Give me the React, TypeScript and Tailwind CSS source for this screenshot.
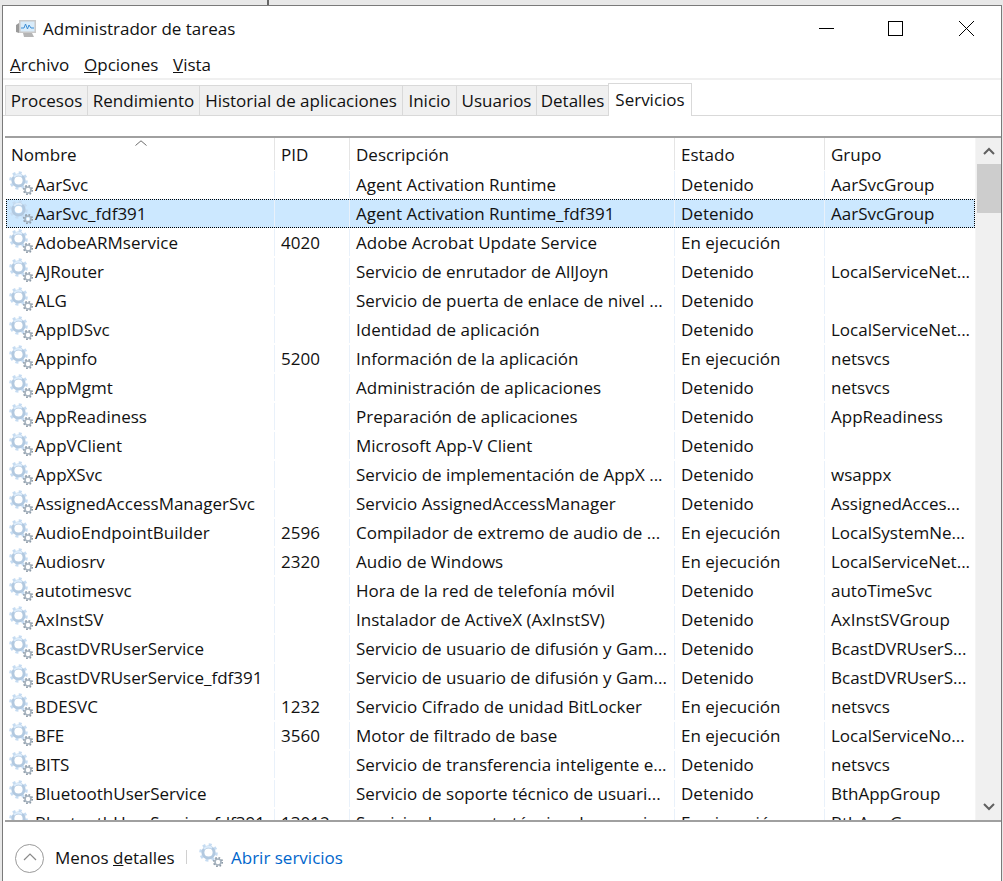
const services = [
  ['AarSvc', '', 'Agent Activation Runtime', 'Detenido', 'AarSvcGroup'],
  ['AarSvc_fdf391', '', 'Agent Activation Runtime_fdf391', 'Detenido', 'AarSvcGroup'],
  ['AdobeARMservice', '4020', 'Adobe Acrobat Update Service', 'En ejecución', ''],
  ['AJRouter', '', 'Servicio de enrutador de AllJoyn', 'Detenido', 'LocalServiceNet...'],
  ['ALG', '', 'Servicio de puerta de enlace de nivel ...', 'Detenido', ''],
  ['AppIDSvc', '', 'Identidad de aplicación', 'Detenido', 'LocalServiceNet...'],
  ['Appinfo', '5200', 'Información de la aplicación', 'En ejecución', 'netsvcs'],
  ['AppMgmt', '', 'Administración de aplicaciones', 'Detenido', 'netsvcs'],
  ['AppReadiness', '', 'Preparación de aplicaciones', 'Detenido', 'AppReadiness'],
  ['AppVClient', '', 'Microsoft App-V Client', 'Detenido', ''],
  ['AppXSvc', '', 'Servicio de implementación de AppX ...', 'Detenido', 'wsappx'],
  ['AssignedAccessManagerSvc', '', 'Servicio AssignedAccessManager', 'Detenido', 'AssignedAcces...'],
  ['AudioEndpointBuilder', '2596', 'Compilador de extremo de audio de ...', 'En ejecución', 'LocalSystemNe...'],
  ['Audiosrv', '2320', 'Audio de Windows', 'En ejecución', 'LocalServiceNet...'],
  ['autotimesvc', '', 'Hora de la red de telefonía móvil', 'Detenido', 'autoTimeSvc'],
  ['AxInstSV', '', 'Instalador de ActiveX (AxInstSV)', 'Detenido', 'AxInstSVGroup'],
  ['BcastDVRUserService', '', 'Servicio de usuario de difusión y Gam...', 'Detenido', 'BcastDVRUserS...'],
  ['BcastDVRUserService_fdf391', '', 'Servicio de usuario de difusión y Gam...', 'Detenido', 'BcastDVRUserS...'],
  ['BDESVC', '1232', 'Servicio Cifrado de unidad BitLocker', 'En ejecución', 'netsvcs'],
  ['BFE', '3560', 'Motor de filtrado de base', 'En ejecución', 'LocalServiceNo...'],
  ['BITS', '', 'Servicio de transferencia inteligente e...', 'Detenido', 'netsvcs'],
  ['BluetoothUserService', '', 'Servicio de soporte técnico de usuari...', 'Detenido', 'BthAppGroup'],
  ['BluetoothUserService_fdf391', '13012', 'Servicio de soporte técnico de usuari...', 'En ejecución', 'BthAppGroup'],
];

const tabs = [
  { name: 'Procesos', width: 'w-[82px]' },
  { name: 'Rendimiento', width: 'w-[112px]' },
  { name: 'Historial de aplicaciones', width: 'w-[203px]' },
  { name: 'Inicio', width: 'w-[54px]' },
  { name: 'Usuarios', width: 'w-[80px]' },
  { name: 'Detalles', width: 'w-[72px]' },
];

function GearIcon({ className }: { className: string }) {
  return (
    <svg className={className} viewBox="0 0 24 24" fill="none">
      <circle cx="9.5" cy="9.5" r="8" stroke="#c6dcf2" strokeWidth="2.6" strokeDasharray="3 3.28" />
      <circle cx="9.5" cy="9.5" r="5.6" stroke="#b2c9e0" strokeWidth="3" />
      <path d="M5 6 A5.6 5.6 0 0 1 13 5" stroke="#dcecfb" strokeWidth="2" />
      <circle cx="9.5" cy="9.5" r="3.6" fill="#ffffff" />
      <circle cx="19" cy="19" r="4.2" stroke="#8b98a5" strokeWidth="1.8" strokeDasharray="1.6 1.7" />
      <circle cx="19" cy="19" r="3" stroke="#a5b2be" strokeWidth="1.6" />
      <circle cx="19" cy="19" r="1.4" fill="#ffffff" />
    </svg>
  );
}

function TaskIcon() {
  return (
    <svg className="h-[22px] w-[22px]" viewBox="0 0 22 22" fill="none">
      <path d="M1 8 L4 6 L4 16 L1 15 Z" fill="#9a9a9a" />
      <rect x="4" y="3" width="17" height="13" fill="#c9c9c9" />
      <rect x="5.5" y="4.5" width="14" height="10" fill="#d9ecfa" />
      <path d="M6 11 L9 11 L10.5 7 L12.5 12 L14 8 L16 11 L19 11" stroke="#3d8fd6" strokeWidth="1" />
      <path d="M8 16 H17 L19 20 H9 Z" fill="#b5b5b5" />
    </svg>
  );
}

function Row({ service, selected }: { service: string[]; selected: boolean }) {
  const cell = 'h-full shrink-0 border-r border-[#e9f1fa] pl-[6px] whitespace-nowrap overflow-hidden leading-[27px]';
  return (
    <div className={`ml-px flex h-[29px] w-[969px] shrink-0 border border-dotted ${selected ? 'border-[#000000] bg-[#cce8ff]' : 'border-transparent'}`}>
      <div className={`${cell} w-[268px] flex items-center !pl-[2px]`}>
        <GearIcon className="h-[24px] w-[24px] shrink-0 -mt-[3px] mr-[2px]" />
        <span>{service[0]}</span>
      </div>
      <div className={`${cell} w-[75px]`}>{service[1]}</div>
      <div className={`${cell} w-[325px]`}>{service[2]}</div>
      <div className={`${cell} w-[150px]`}>{service[3]}</div>
      <div className={`${cell} w-[149px] border-r-0`}>{service[4]}</div>
    </div>
  );
}

export default function App() {
  const headerCell = 'h-full shrink-0 border-r border-[#e5e5e5] pl-[6px] pt-[4px]';

  return (
    <div className="h-[881px] w-[1003px] overflow-hidden bg-[#e8e8e8] pl-[2px] pr-[1px] text-[17px] text-[#111111] font-['Open_Sans','Noto_Sans',sans-serif]">
      {/* edge of the window behind */}
      <div className="ml-[265px] h-[5px] w-[2px] bg-[#666666]" />

      <div className="flex h-[876px] flex-col border-x border-t border-[#7a7a7a] bg-white">
        {/* title bar */}
        <div className="flex h-[44px] shrink-0 items-center pl-[12px]">
          <TaskIcon />
          <span className="ml-[6px] mt-[1px]">Administrador de tareas</span>
          <div className="ml-auto flex items-center pr-[27px]">
            <div className="h-px w-[15px] bg-black" />
            <div className="ml-[54px] h-[15px] w-[15px] border border-black" />
            <svg className="ml-[56px] h-[15px] w-[15px]" viewBox="0 0 15 15" stroke="#000" strokeWidth="1">
              <path d="M0 0 L15 15 M15 0 L0 15" />
            </svg>
          </div>
        </div>

        {/* menu */}
        <div className="flex h-[30px] shrink-0 items-center gap-[14px] border-b-2 border-[#f0f0f0] pl-[7px] pt-[1px]">
          <span className="w-[60px]"><u>A</u>rchivo</span>
          <span className="w-[75px]"><u>O</u>pciones</span>
          <span><u>V</u>ista</span>
        </div>

        {/* tabs */}
        <div className="flex h-[36px] shrink-0 items-end border-b border-[#d9d9d9] pl-[2px]">
          {tabs.map((tab) => (
            <div key={tab.name} className={`flex h-[30px] items-center justify-center whitespace-nowrap border border-b-0 border-r-0 border-[#d9d9d9] bg-[#f0f0f0] ${tab.width}`}>
              {tab.name}
            </div>
          ))}
          <div className="-mb-px flex h-[33px] w-[84px] items-center justify-center border border-b-0 border-[#d9d9d9] bg-white">
            Servicios
          </div>
        </div>

        <div className="h-[20px] shrink-0" />

        {/* list */}
        <div className="ml-[2px] flex h-[686px] shrink-0 overflow-hidden border-y-2 border-[#a0a0a0]">
          <div className="flex w-[970px] shrink-0 flex-col overflow-hidden">
            <div className="relative flex h-[32px] shrink-0">
              <div className={`${headerCell} w-[270px]`}>Nombre</div>
              <div className={`${headerCell} w-[75px]`}>PID</div>
              <div className={`${headerCell} w-[325px]`}>Descripción</div>
              <div className={`${headerCell} w-[150px]`}>Estado</div>
              <div className={`${headerCell} w-[149px] border-r-0`}>Grupo</div>
              <svg className="absolute left-[130px] top-[2px] h-[6px] w-[12px]" viewBox="0 0 12 6" fill="none" stroke="#6d6d6d">
                <path d="M0.5 5.5 L6 0.8 L11.5 5.5" />
              </svg>
            </div>
            {services.map((service, i) => (
              <Row key={service[0]} service={service} selected={i === 1} />
            ))}
          </div>
          <div className="flex w-[26px] shrink-0 flex-col items-center border-l border-[#f5f5f5] bg-[#f0f0f0]">
            <div className="flex h-[26px] shrink-0 items-center">
              <svg className="h-[8px] w-[12px]" viewBox="0 0 12 8" fill="none" stroke="#606060" strokeWidth="2">
                <path d="M1 7 L6 2 L11 7" />
              </svg>
            </div>
            <div className="h-[49px] w-[24px] shrink-0 bg-[#cdcdcd]" />
            <div className="mt-auto flex h-[26px] shrink-0 items-center">
              <svg className="h-[8px] w-[12px]" viewBox="0 0 12 8" fill="none" stroke="#606060" strokeWidth="2">
                <path d="M1 1 L6 6 L11 1" />
              </svg>
            </div>
          </div>
        </div>

        {/* footer */}
        <div className="flex min-h-0 flex-1 items-center pl-[12px] pt-[13px]">
          <div className="flex h-[29px] w-[29px] items-center justify-center rounded-full border border-[#9a9a9a]">
            <svg className="-mt-[2px] h-[8px] w-[14px]" viewBox="0 0 14 8" fill="none" stroke="#8a8a8a" strokeWidth="1.2">
              <path d="M1 7 L7 1 L13 7" />
            </svg>
          </div>
          <span className="ml-[11px] w-[119px] whitespace-nowrap">Menos <u>d</u>etalles</span>
          <div className="ml-[12px] -mt-[3px] h-[14px] w-px bg-[#d0d0d0]" />
          <GearIcon className="ml-[12px] -mt-[6px] h-[24px] w-[24px]" />
          <span className="ml-[8px] text-[#0066cc]">Abrir servicios</span>
        </div>
      </div>
    </div>
  );
}
